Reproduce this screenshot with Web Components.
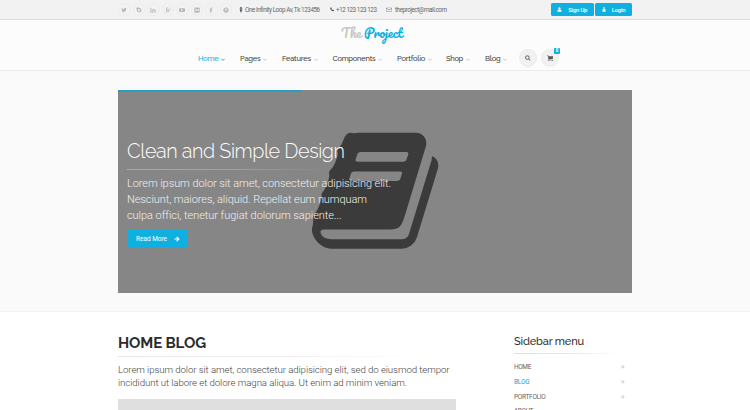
<!DOCTYPE html>
<html lang="en"><head><meta charset="utf-8"><title>The Project</title>
<style>html,body{margin:0;height:410px;overflow:hidden;background:#fff}body{font-family:Roboto,"Liberation Sans",sans-serif;color:#777}</style></head>
<body><project-page></project-page>
<script>
const ICONS={
book:['0 0 1792 1792','M1639 478q40 57 18 129l-275 906q-19 64-76.5 107.5t-122.5 43.5h-923q-77 0-148.5-53.5t-99.5-131.5q-24-67-2-127 0-4 3-27t4-37q1-8-3-21.5t-3-19.5q2-11 8-21t16.5-23.5 16.5-23.5q23-38 45-91.5t30-91.5q3-10 .5-30t-.5-28q3-11 17-28t17-23q21-36 42-92t25-90q1-9-2.5-32t.5-28q4-13 22-30.5t22-22.5q19-26 42.5-84.5t27.5-96.5q1-8-3-25.5t-2-26.5q2-8 9-18t18-23 17-21q8-12 16.5-30.5t15-35 16-36 19.5-32 26.5-23.5 36-11.5 47.5 5.5l-1 3q38-9 51-9h761q74 0 114 56t18 130l-274 906q-36 119-71.5 153.5t-128.5 34.5h-869q-27 0-38 15-11 16-1 43 24 70 144 70h923q29 0 56-15.5t35-41.5l300-987q7-22 5-57 38 15 59 43zm-1064 2q-4 13 2 22.5t20 9.5h608q13 0 25.5-9.5t16.5-22.5l21-64q4-13-2-22.5t-20-9.5h-608q-13 0-25.5 9.5t-16.5 22.5zm-83 256q-4 13 2 22.5t20 9.5h608q13 0 25.5-9.5t16.5-22.5l21-64q4-13-2-22.5t-20-9.5h-608q-13 0-25.5 9.5t-16.5 22.5z'],
twitter:['0 0 1792 1792','M1684 408q-67 98-162 167 1 14 1 42 0 130-38 259.500t-115.500 248.500-184.500 210.500-258 146-323 54.500q-271 0-496-145 35 4 78 4 225 0 401-138-105-2-188-64.500t-114-159.500q33 5 61 5 43 0 85-11-112-23-185.500-111.500t-73.500-205.500v-4q68 38 146 41-66-44-105-115t-39-154q0-88 44-163 121 149 294.500 238.500t371.500 99.500q-8-38-8-74 0-134 94.500-228.500t228.500-94.500q140 0 236 102 109-21 205-78-37 115-142 178 93-10 186-50z'],
skype:['0 0 16 16','M1 4a4 4 0 0 1 6-2a6 6 0 0 1 7 7a4 4 0 0 1-5 5a6 6 0 0 1-7-7zM10.500 6.300C10 4 5 4 5 6.500c0 2 3.500 1.800 3.500 2.700 0 1-2.300.8-2.500-.3L4.500 9c.3 3.200 6.500 3.200 6.500-.2 0-2.500-4-2-4-2.700 0-.7 1.700-.6 2 .4z'],
linkedin:['0 0 16 16','M1 6h3v9H1zM1 2h3v3H1zM6 6h3v1.500C10 5.500 15 5 15 10v5h-3v-5c0-3-3-2.500-3 0v5H6z'],
gplus:['0 0 16 16','M11 1H6C2 1 0 7 5 8c1 1-3 1-3 4 0 4 9 4 9-1 0-2-2-3-3-4 2-2 1-4 0-5zM6 2c2 0 3 5 1 5S4 2 6 2zm0 8c4 0 4 4 1 4s-3-4-1-4zM13 4h1v2h2v1h-2v2h-1V7h-2V6h2z'],
youtube:['0 0 16 16','M2 3h12q2 0 2 2v6q0 2-2 2H2q-2 0-2-2V5q0-2 2-2zm4 2v6l5-3z'],
flickr:['0 0 16 16','M3 1h10q2 0 2 2v10q0 2-2 2H3q-2 0-2-2V3q0-2 2-2zm0 5v4h4V6zm6 0v4h4V6z'],
facebook:['0 0 16 16','M12 1v3h-2q-1 0-1 1v2h3l-.5 3H9v6H6v-6H4V7h2V4.500Q6 1 9.500 1z'],
pinterest:['0 0 16 16','M8 1a7 7 0 1 1 0 14 7 7 0 0 1 0-14zM6 13l1-4c3 2 5-1 4-3-1-3-7-2-6 2l1 1c0-6 4-4 3-2 0 2-2 2-1-1H7z'],
pin:['0 0 16 16','M8 0a5 5 0 0 1 5 5c0 3-3 7-5 11C6 12 3 8 3 5a5 5 0 0 1 5-5zm0 3a2 2 0 1 0 0 4 2 2 0 0 0 0-4z'],
phone:['0 0 16 16','M1 3l3-2 3 4-2 2q1 3 4 4l2-2 4 3-2 3C7 17-1 8 1 3z'],
mail:['0 0 16 16','M1 2h14q1 0 1 1v10q0 1-1 1H1q-1 0-1-1V3q0-1 1-1zm.500 1.500L8 8l6.500-4.500zM1.300 5v7.700h13.400V5L8 10z'],
user:['0 0 16 16','M8 1a3.500 3.500 0 0 1 3 5.500L10 8q5 1 5 6v1H1v-1q0-5 5-6L5 6.500A3.500 3.500 0 0 1 8 1z'],
lock:['0 0 16 16','M4 7V5a4 4 0 0 1 8 0v2h2v8H2V7zm2 0h4V5a2 2 0 0 0-4 0z'],
search:['0 0 1792 1792','M1216 832q0-185-131.500-316.500t-316.500-131.500-316.500 131.500-131.500 316.500 131.500 316.500 316.500 131.500 316.500-131.500 131.500-316.500zm512 832q0 52-38 90t-90 38q-54 0-90-38l-343-342q-179 124-399 124-143 0-273.500-55.500t-225-150-150-225-55.500-273.500 55.500-273.500 150-225 225-150 273.500-55.500 273.500 55.500 225 150 150 225 55.500 273.500q0 220-124 399l343 343q37 37 37 90z'],
cart:['0 0 16 16','M0 1h3l.5 2H16l-1.500 6.500L5 10.500v1h9V13H3.500V10L2 2.500H0zM5 13a1.500 1.500 0 1 1 0 3 1.500 1.500 0 0 1 0-3zm8 0a1.500 1.500 0 1 1 0 3 1.500 1.500 0 0 1 0-3z'],
arrow:['0 0 16 16','M8 1l7 7-7 7-2-2 3-3.500H1v-3h8L6 3z'],
chev:['0 0 16 16','M0 5l2-2 6 5 6-5 2 2-8 8z'],
dbl:['0 0 16 16','M1 3l2-2 5 7-5 7-2-2 4-5zM8 3l2-2 5 7-5 7-2-2 4-5z']};
const define=(name,html,init)=>customElements.define(name,class extends HTMLElement{
 connectedCallback(){if(this.shadowRoot)return;const t=document.createElement('template');t.innerHTML=html;this.attachShadow({mode:'open'}).append(t.content.cloneNode(true));init&&init(this,this.shadowRoot)}});

define('ui-icon','<style>:host{display:block;flex:none}svg{display:block;width:100%;height:100%;fill:currentColor;fill-rule:evenodd}</style><svg><path/></svg>',(h,r)=>{
 const [vb,d]=ICONS[h.getAttribute('name')],s=r.querySelector('svg');s.setAttribute('viewBox',vb);s.setAttribute('preserveAspectRatio','none');s.firstChild.setAttribute('d',d);
 const z=h.getAttribute('size')||6;h.style.width=z+'px';h.style.height=(h.getAttribute('h')||z)+'px'});

/* A single line of text whose tracking is adjusted to fill its given width. */
define('fit-text','<style>:host{display:block;white-space:nowrap;flex:none}span{display:inline-block}</style><span><slot></slot></span>',(h,r)=>{
 const w=+h.getAttribute('w'),s=r.querySelector('span');h.style.width=w+'px';
 const n=h.textContent.length;s.style.letterSpacing=((w-s.getBoundingClientRect().width)/n)+'px'});

define('top-bar',`<style>:host{display:flex;box-sizing:border-box;height:20px;padding:0 118px;background:#f2f2f2;border-bottom:1px solid #ddd;align-items:center;font-size:6.300px;line-height:8px;color:#666}
.s{display:flex;gap:2px;width:121px}.i{display:grid;place-items:center;width:12.500px;height:13px;border:1px solid #ececec;border-radius:50%;box-sizing:border-box;color:#b9b9b9;flex:none}
.c{display:flex;align-items:center}.c>ui-icon{margin-right:2px;color:#555}.b{margin-left:auto;display:flex;gap:1.500px}
action-button{height:13px}</style>
<div class="s">${['twitter','skype','linkedin','gplus','youtube','flickr','facebook','pinterest'].map(n=>`<span class="i"><ui-icon name="${n}" size="6"></ui-icon></span>`).join('')}</div>
<div class="c"><ui-icon name="pin" size="4" h="6"></ui-icon><fit-text w="74.500">One Infinity Loop Av, Tk 123456</fit-text><ui-icon name="phone" size="4.500" style="margin-left:10px"></ui-icon><fit-text w="40.500">+12 123 123 123</fit-text><ui-icon name="mail" size="6" h="5" style="margin-left:9.500px;margin-right:3px;color:#888"></ui-icon><fit-text w="51.500">theproject@mail.com</fit-text></div>
<div class="b"><action-button style="width:42.500px"><ui-icon name="user" size="5"></ui-icon><fit-text w="19">Sign Up</fit-text></action-button><action-button style="width:37px"><ui-icon name="lock" size="4" h="5"></ui-icon><fit-text w="13.500">Login</fit-text></action-button></div>`);
define('action-button','<style>:host{display:flex;align-items:center;justify-content:center;gap:6px;background:#0fb0df;border-radius:1.500px;box-sizing:border-box;color:#fff;font-size:6px;line-height:8px;font-weight:500}</style><slot></slot>');
define('nav-item','<style>:host{display:flex;align-items:center;gap:2.500px;color:#3c3c3c}ui-icon{color:#c4c4c4;margin-top:2px}:host([active]),:host([active]) ui-icon{color:#0fb0df}</style><slot></slot><ui-icon name="chev" size="4" h="3.500"></ui-icon>');
define('site-header',`<style>:host{display:flex;flex-direction:column;height:51px;box-sizing:border-box;background:#fcfcfc;border-bottom:1px solid #ececec;font:500 7.500px/10px Raleway,Lato,sans-serif}
.logo{height:28px;box-sizing:border-box;padding-bottom:3px;display:flex;align-items:center;padding-left:341px;font:400 13px/18px Pacifico,cursive;color:#c8c8c8}.logo b{font-weight:400;color:#0fb0df;margin-left:3px}
nav{display:grid;grid-template-columns:42px 42px 50.500px 64.500px 49px 39px 34px 22px 18px;padding-left:198px;height:20px;align-items:center}
nav-item{padding-top:1px}
.r{width:18px;height:18px;box-sizing:border-box;border:1px solid #ececec;background:#f1f1f1;border-radius:50%;display:grid;place-items:center;color:#555;position:relative}
.n{position:absolute;left:12px;top:-2px;width:6px;height:6px;background:#0fb0df;border-radius:1px;color:#fff;font:bold 4.500px/6px Roboto,sans-serif;text-align:center}</style>
<div class="logo"><fit-text w="20">The</fit-text><b><fit-text w="38.500">Project</fit-text></b></div>
<nav>${[['Home',20.5],['Pages',20.5],['Features',29],['Components',43],['Portfolio',28],['Shop',17],['Blog',15.5]].map(([t,w],i)=>`<nav-item ${i?'':'active'}><fit-text w="${w}">${t}</fit-text></nav-item>`).join('')}
<span class="r"><ui-icon name="search" size="5.500"></ui-icon></span><span class="r"><ui-icon name="cart" size="6.500"></ui-icon><span class="n">0</span></span></nav>`);
define('hero-slide',`<style>:host{display:block;background:#fafafa;height:241px;box-sizing:border-box;padding:19px 118px 18px;border-bottom:1px solid #f3f3f3}
.s{height:203px;background:#868686;position:relative;overflow:hidden;color:#f0f0f0}.p{height:2px;width:184px;background:#269fc3}
.book{position:absolute;left:193.500px;top:33px;color:#3b3b3b}.c{position:relative;padding:46px 0 0 9px}
fit-text.h{font:300 19.800px/26px Raleway,Lato,sans-serif;color:#fff}.d{height:1px;width:205px;margin:5px 0 6px;background:linear-gradient(90deg,#aaa,#a0a0a0 50%,transparent)}
.t{font:300 11px/16px Roboto,sans-serif}.b{width:61px;height:17px;margin-top:6px;font-size:6.500px;font-weight:400;gap:7px;padding-left:1px;border-radius:0}</style>
<div class="s"><div class="p"></div><ui-icon class="book" name="book" size="136" h="135.500"></ui-icon><div class="c"><fit-text class="h" w="217.500">Clean and Simple Design</fit-text><div class="d"></div><div class="t"><fit-text w="264">Lorem ipsum dolor sit amet, consectetur adipisicing elit.</fit-text><fit-text w="240">Nesciunt, maiores, aliquid. Repellat eum numquam</fit-text><fit-text w="214">culpa offici, tenetur fugiat dolorum sapiente...</fit-text></div><action-button class="b"><fit-text w="31">Read More</fit-text><ui-icon name="arrow" size="6"></ui-icon></action-button></div></div>`);
define('blog-intro',`<style>:host{display:block;width:338px}.h{font:700 15px/20px Raleway,Lato,sans-serif;color:#2c2c2c;margin-top:21px}.d{height:1px;width:300px;margin:3px 0 6px;background:linear-gradient(90deg,#e8e8e8,#f0f0f0 60%,transparent)}.t{font:300 9.700px/13px Roboto,sans-serif;color:#444}.g{height:20px;background:#dfdfdf;margin-top:10px}</style><fit-text class="h" w="88">HOME BLOG</fit-text><div class="d"></div><div class="t"><fit-text w="331.500">Lorem ipsum dolor sit amet, consectetur adipisicing elit, sed do eiusmod tempor</fit-text><fit-text w="289">incididunt ut labore et dolore magna aliqua. Ut enim ad minim veniam.</fit-text></div><div class="g"></div>`);
define('side-menu',`<style>:host{display:block;width:118px;font:6.500px/15px Roboto,sans-serif;color:#666}.h{font:500 11px/16px Raleway,Lato,sans-serif;color:#333;margin-top:22px}.d{height:1px;width:105px;margin:3px 0 6px;background:linear-gradient(90deg,#e0e0e0,#e9e9e9 60%,transparent)}.i{display:flex;justify-content:space-between;align-items:center;height:14.700px;line-height:14px;padding-right:7px}.i ui-icon{color:#bbb}.a{color:#0fa5df}</style><fit-text class="h" w="70">Sidebar menu</fit-text><div class="d"></div>${[['HOME',17],['BLOG',15.5],['PORTFOLIO',31.5],['ABOUT',19]].map(([t,w],i)=>`<div class="i ${i==1?'a':''}"><fit-text w="${w}">${t}</fit-text><ui-icon name="dbl" size="3.800"></ui-icon></div>`).join('')}`);
define('project-page',`<style>:host{display:block;width:750px;height:410px;overflow:hidden}main{display:flex;justify-content:space-between;padding:0 118px;height:98px;overflow:hidden}</style><top-bar></top-bar><site-header></site-header><hero-slide></hero-slide><main><blog-intro></blog-intro><side-menu></side-menu></main>`);
</script></body></html>
